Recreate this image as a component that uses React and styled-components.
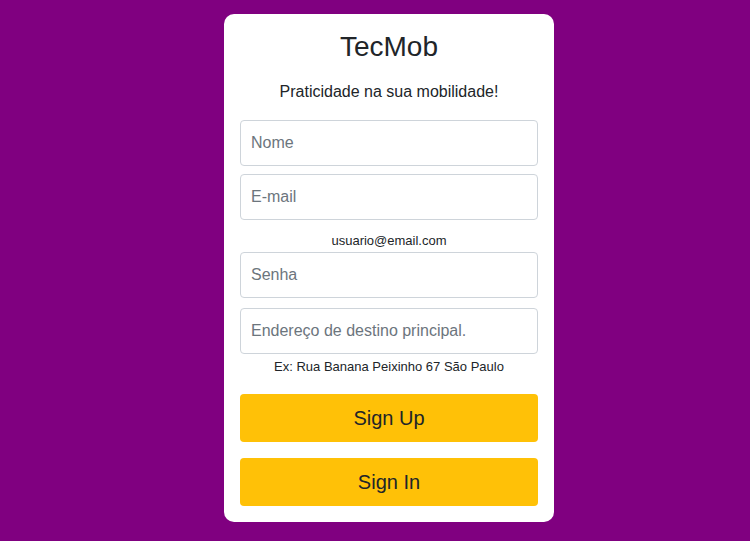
import React from "react";
import styled, { createGlobalStyle } from "styled-components";

const GlobalStyle = createGlobalStyle`
  html, body {
    margin: 0;
    padding: 0;
    background: #800080;
    font-family: "Liberation Sans", Arial, sans-serif;
    color: #212529;
  }
  * { box-sizing: border-box; }
`;

const Page = styled.div`
  min-height: 541px;
  display: flex;
  justify-content: center;
  align-items: flex-start;
  padding: 14px 0 0 28px;
`;

const Card = styled.div`
  width: 330px;
  background: #fff;
  border-radius: 10px;
  padding: 16px;
  display: flex;
  flex-direction: column;
`;

const Title = styled.h1`
  margin: 0;
  font-size: 28px;
  font-weight: 400;
  line-height: 34px;
  text-align: center;
`;

const Subtitle = styled.p`
  margin: 16px 0 16px;
  font-size: 16px;
  line-height: 24px;
  text-align: center;
`;

const Input = styled.input`
  width: 100%;
  height: 46px;
  padding: 0 10px;
  border: 1px solid #ced4da;
  border-radius: 4px;
  font-family: inherit;
  font-size: 16px;
  color: #495057;
  margin-top: ${(p) => p.$gap || 0}px;
  &::placeholder {
    color: #6c757d;
  }
`;

const Hint = styled.div`
  font-size: 13px;
  line-height: 20px;
  text-align: center;
  margin-top: ${(p) => p.$top}px;
  margin-bottom: ${(p) => p.$bottom}px;
`;

const Button = styled.button`
  width: 100%;
  height: 48px;
  border: none;
  border-radius: 4px;
  background: #ffc107;
  color: #212529;
  font-family: inherit;
  font-size: 20px;
  margin-top: ${(p) => p.$gap}px;
  cursor: pointer;
`;

export default function App() {
  return (
    <>
      <GlobalStyle />
      <Page>
        <Card>
          <Title>TecMob</Title>
          <Subtitle>Praticidade na sua mobilidade!</Subtitle>
          <Input placeholder="Nome" />
          <Input placeholder="E-mail" $gap={8} />
          <Hint $top={11} $bottom={1}>usuario@email.com</Hint>
          <Input type="password" placeholder="Senha" />
          <Input placeholder="Endereço de destino principal." $gap={10} />
          <Hint $top={3} $bottom={0}>Ex: Rua Banana Peixinho 67 São Paulo</Hint>
          <Button $gap={17}>Sign Up</Button>
          <Button $gap={16}>Sign In</Button>
        </Card>
      </Page>
    </>
  );
}
